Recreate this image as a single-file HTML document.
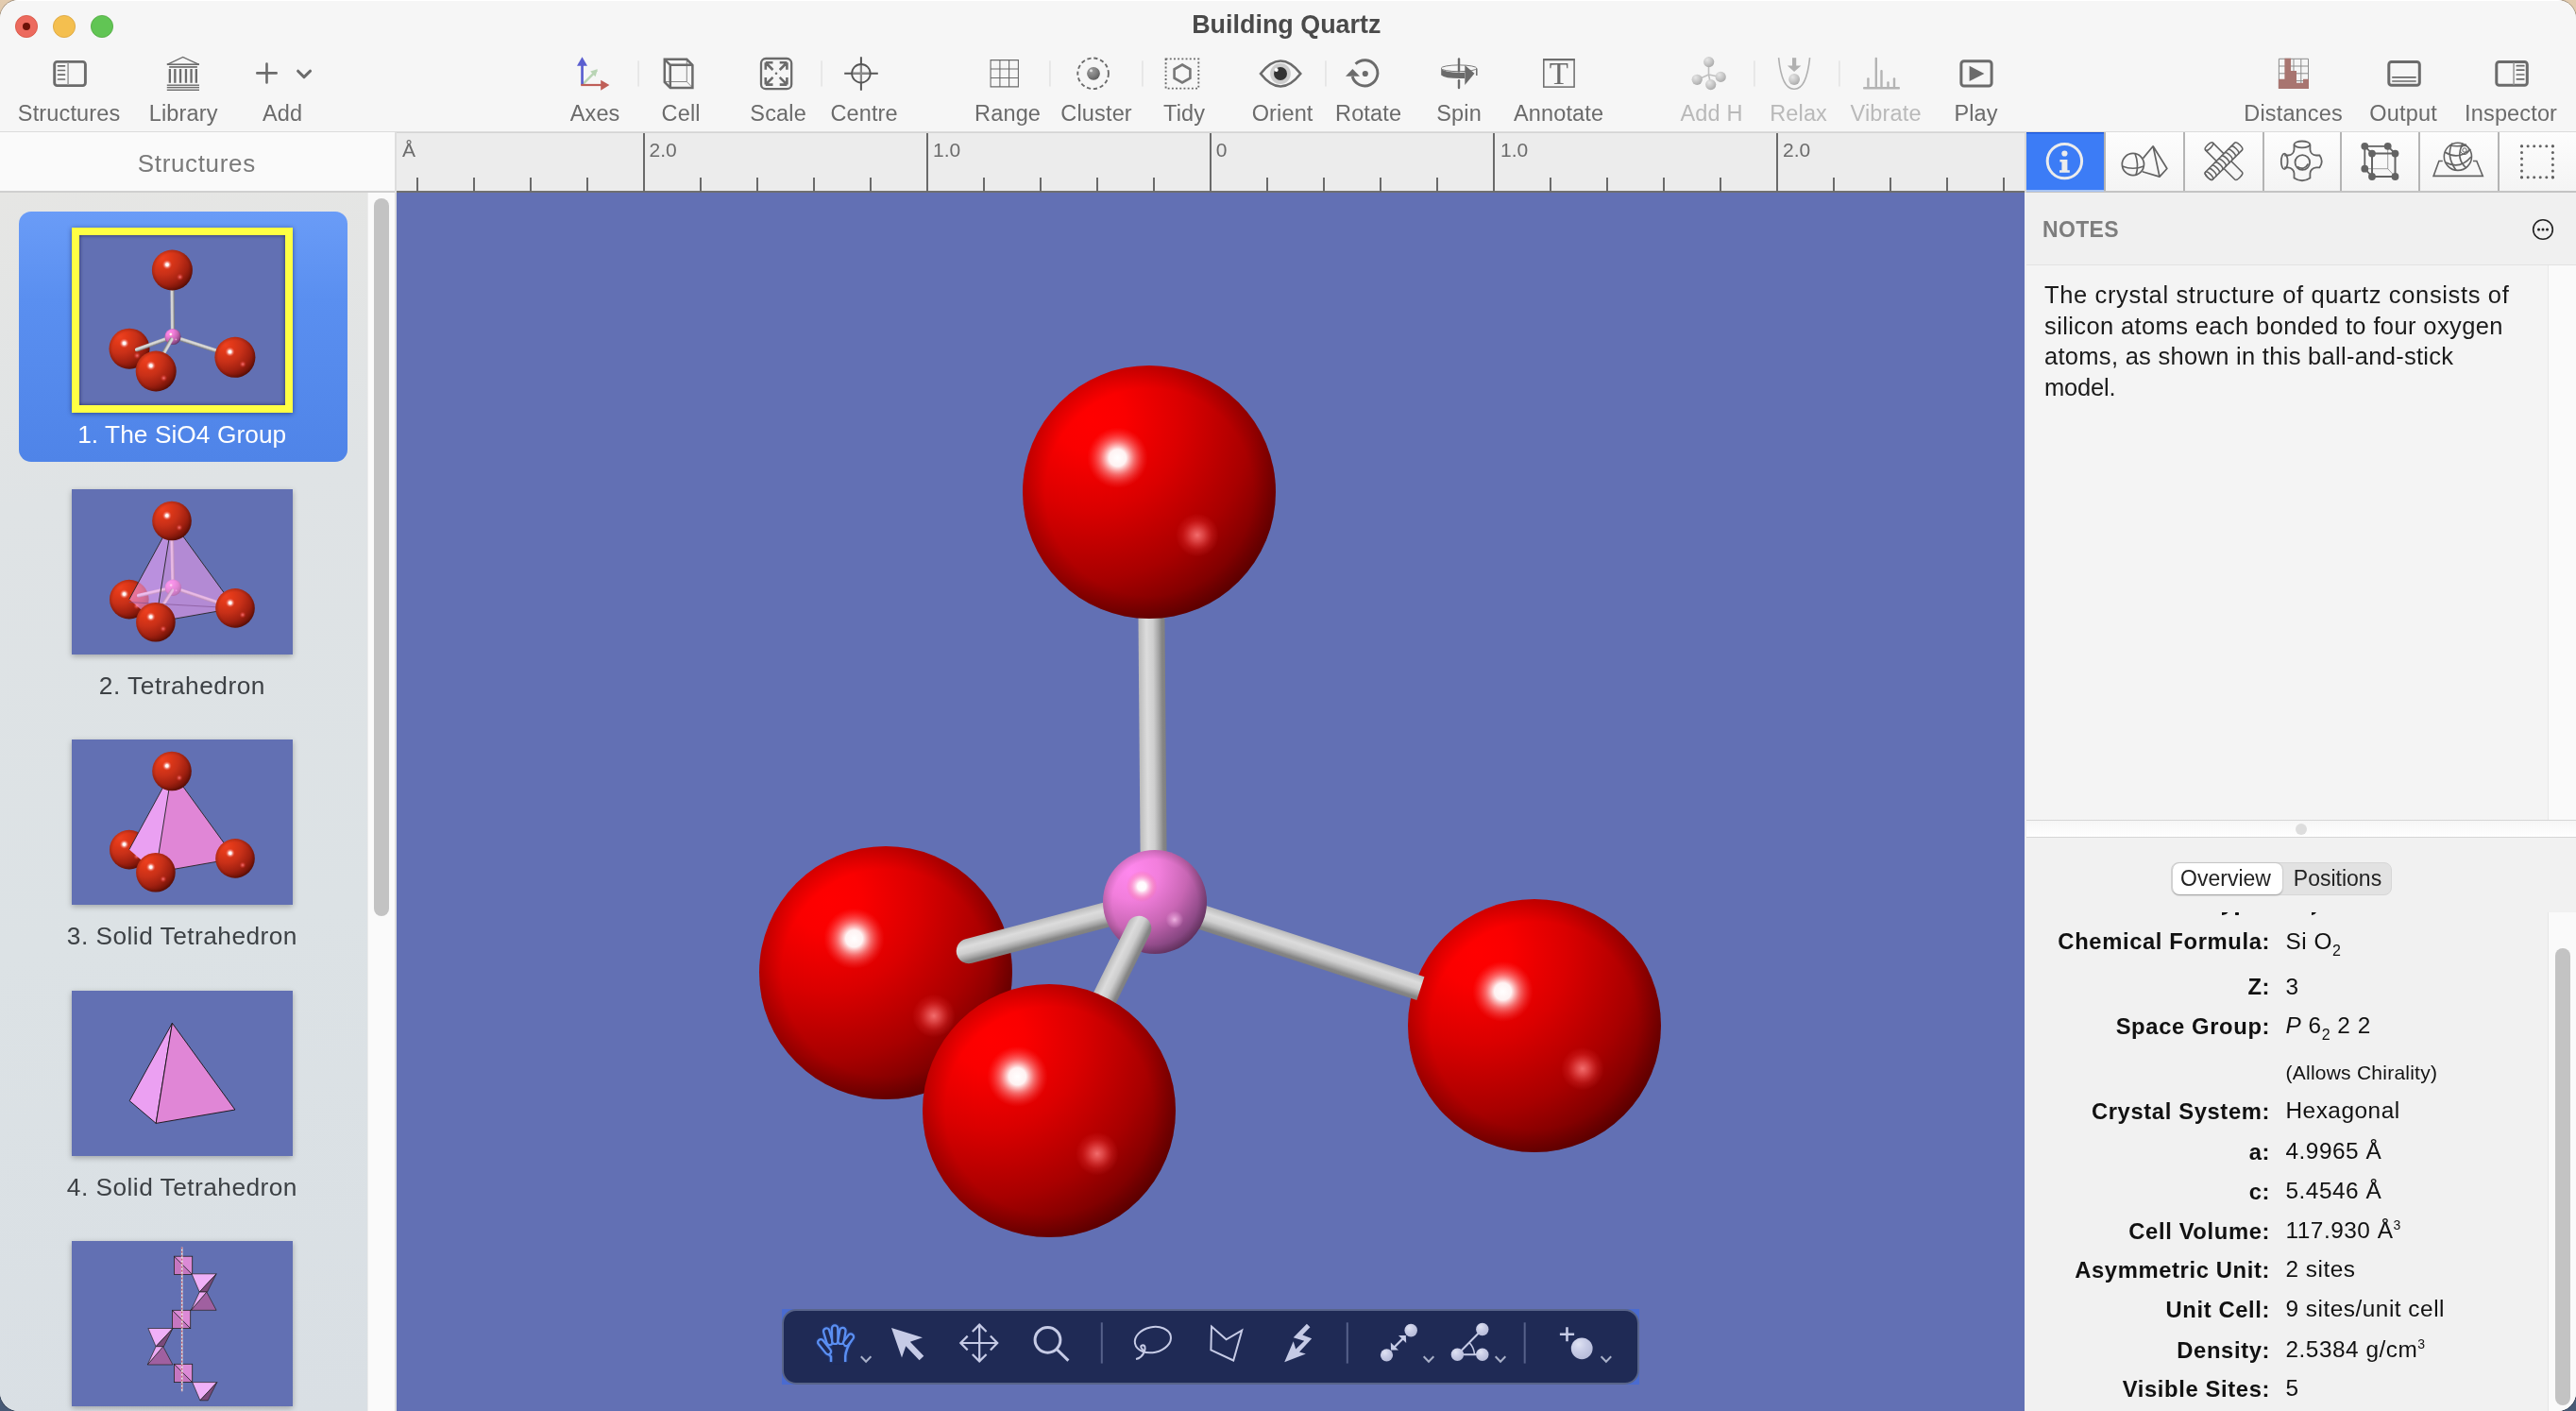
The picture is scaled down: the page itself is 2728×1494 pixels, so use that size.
<!DOCTYPE html>
<html><head><meta charset="utf-8"><style>
html,body{margin:0;padding:0;}
body{width:2728px;height:1494px;overflow:hidden;position:relative;background:linear-gradient(180deg,#e3ccb0 0px,#dcc6ab 60px,#8a8f98 800px,#485a76 1494px);font-family:"Liberation Sans", sans-serif;}
#win{will-change:transform;position:absolute;left:0;top:0;width:2728px;height:1494px;border-radius:20px;overflow:hidden;background:#f6f6f6;box-shadow:0 0 0 1px rgba(0,0,0,0.28);}
.t{position:absolute;white-space:pre;}
.r{position:absolute;}
.sb{font-size:16px;position:relative;top:7px;}
.sp{font-size:14px;position:relative;top:-9px;letter-spacing:0;}
svg{position:absolute;left:0;top:0;}
</style></head><body><div id="win">
<div class="r" style="left:0px;top:0px;width:2728px;height:140px;background:#f6f6f6;"></div><div class="r" style="left:0px;top:139px;width:2728px;height:1px;background:#dcdcdc;"></div><div class="r" style="left:0px;top:0px;width:2728px;height:1px;background:#ffffff;"></div><div class="t" style="top:13.2px;font-size:26.9px;line-height:26.9px;color:#4a4a4a;font-weight:700;left:762.3px;width:1200px;text-align:center;">Building Quartz</div><svg width="140" height="56" style="left:0;top:0"><circle cx="28" cy="28" r="11.6" fill="#ec6a5e" stroke="#d5503f" stroke-width="0.8"/><circle cx="28" cy="28" r="4" fill="#6b1208"/><circle cx="68" cy="28" r="11.6" fill="#f4bf4f" stroke="#d9a23a" stroke-width="0.8"/><circle cx="108" cy="28" r="11.6" fill="#61c554" stroke="#4fa83f" stroke-width="0.8"/></svg><div class="t" style="top:109.1px;font-size:23.5px;line-height:23.5px;color:#6b6b6b;letter-spacing:0.15px;left:-526.9px;width:1200px;text-align:center;">Structures</div><div class="t" style="top:109.1px;font-size:23.5px;line-height:23.5px;color:#6b6b6b;letter-spacing:0.15px;left:-405.9px;width:1200px;text-align:center;">Library</div><div class="t" style="top:109.1px;font-size:23.5px;line-height:23.5px;color:#6b6b6b;letter-spacing:0.15px;left:-300.9px;width:1200px;text-align:center;">Add</div><div class="t" style="top:109.1px;font-size:23.5px;line-height:23.5px;color:#6b6b6b;letter-spacing:0.15px;left:30.1px;width:1200px;text-align:center;">Axes</div><div class="t" style="top:109.1px;font-size:23.5px;line-height:23.5px;color:#6b6b6b;letter-spacing:0.15px;left:121.1px;width:1200px;text-align:center;">Cell</div><div class="t" style="top:109.1px;font-size:23.5px;line-height:23.5px;color:#6b6b6b;letter-spacing:0.15px;left:224.1px;width:1200px;text-align:center;">Scale</div><div class="t" style="top:109.1px;font-size:23.5px;line-height:23.5px;color:#6b6b6b;letter-spacing:0.15px;left:315.1px;width:1200px;text-align:center;">Centre</div><div class="t" style="top:109.1px;font-size:23.5px;line-height:23.5px;color:#6b6b6b;letter-spacing:0.15px;left:467.1px;width:1200px;text-align:center;">Range</div><div class="t" style="top:109.1px;font-size:23.5px;line-height:23.5px;color:#6b6b6b;letter-spacing:0.15px;left:561.1px;width:1200px;text-align:center;">Cluster</div><div class="t" style="top:109.1px;font-size:23.5px;line-height:23.5px;color:#6b6b6b;letter-spacing:0.15px;left:654.1px;width:1200px;text-align:center;">Tidy</div><div class="t" style="top:109.1px;font-size:23.5px;line-height:23.5px;color:#6b6b6b;letter-spacing:0.15px;left:758.1px;width:1200px;text-align:center;">Orient</div><div class="t" style="top:109.1px;font-size:23.5px;line-height:23.5px;color:#6b6b6b;letter-spacing:0.15px;left:849.1px;width:1200px;text-align:center;">Rotate</div><div class="t" style="top:109.1px;font-size:23.5px;line-height:23.5px;color:#6b6b6b;letter-spacing:0.15px;left:945.1px;width:1200px;text-align:center;">Spin</div><div class="t" style="top:109.1px;font-size:23.5px;line-height:23.5px;color:#6b6b6b;letter-spacing:0.15px;left:1050.6px;width:1200px;text-align:center;">Annotate</div><div class="t" style="top:109.1px;font-size:23.5px;line-height:23.5px;color:#b9b9b9;letter-spacing:0.15px;left:1212.6px;width:1200px;text-align:center;">Add H</div><div class="t" style="top:109.1px;font-size:23.5px;line-height:23.5px;color:#b9b9b9;letter-spacing:0.15px;left:1304.6px;width:1200px;text-align:center;">Relax</div><div class="t" style="top:109.1px;font-size:23.5px;line-height:23.5px;color:#b9b9b9;letter-spacing:0.15px;left:1397.1px;width:1200px;text-align:center;">Vibrate</div><div class="t" style="top:109.1px;font-size:23.5px;line-height:23.5px;color:#6b6b6b;letter-spacing:0.15px;left:1492.6px;width:1200px;text-align:center;">Play</div><div class="t" style="top:109.1px;font-size:23.5px;line-height:23.5px;color:#6b6b6b;letter-spacing:0.15px;left:1828.6px;width:1200px;text-align:center;">Distances</div><div class="t" style="top:109.1px;font-size:23.5px;line-height:23.5px;color:#6b6b6b;letter-spacing:0.15px;left:1945.1px;width:1200px;text-align:center;">Output</div><div class="t" style="top:109.1px;font-size:23.5px;line-height:23.5px;color:#6b6b6b;letter-spacing:0.15px;left:2059.1px;width:1200px;text-align:center;">Inspector</div><div class="r" style="left:0px;top:140px;width:418px;height:63px;background:#fafafa;"></div><div class="r" style="left:0px;top:202px;width:418px;height:2px;background:#cfcfcf;"></div><div class="t" style="top:159.5px;font-size:26px;line-height:26px;color:#7a7a7a;letter-spacing:0.65px;left:-391.7px;width:1200px;text-align:center;">Structures</div><div class="r" style="left:0px;top:204px;width:390px;height:1290px;background:linear-gradient(172deg,#e6e6e4 0%,#dfe3e5 25%,#dce2e5 60%,#d9dfe4 100%);"></div><div class="r" style="left:390px;top:204px;width:28px;height:1290px;background:#fafafa;"></div><div class="r" style="left:389px;top:204px;width:1px;height:1290px;background:#ececec;"></div><div class="r" style="left:396px;top:210px;width:16px;height:760px;background:#c3c3c3;border-radius:8px;"></div><div class="r" style="left:418px;top:140px;width:2px;height:1354px;background:#dedede;"></div><div class="r" style="left:420px;top:140px;width:1724px;height:64px;background:#ececec;"></div><div class="r" style="left:420px;top:202px;width:1724px;height:2px;background:#6f6f6f;"></div><div class="r" style="left:420px;top:204px;width:1724px;height:1290px;background:#6270b4;"></div><div class="r" style="left:2144px;top:140px;width:584px;height:1354px;background:#f0f0f0;"></div><svg width="0" height="0" style="position:absolute"><defs>
<radialGradient id="gRed" cx="0.27" cy="0.21" r="0.9" gradientUnits="objectBoundingBox">
 <stop offset="0" stop-color="#ff0000"/><stop offset="0.15" stop-color="#fa0000"/><stop offset="0.4" stop-color="#da0000"/>
 <stop offset="0.7" stop-color="#a80000"/><stop offset="0.87" stop-color="#800000"/><stop offset="1" stop-color="#640000"/>
</radialGradient>
<radialGradient id="gRedT" cx="0.27" cy="0.21" r="0.9">
 <stop offset="0" stop-color="#ec4020"/><stop offset="0.2" stop-color="#e03818"/><stop offset="0.45" stop-color="#c83018"/>
 <stop offset="0.72" stop-color="#a02010"/><stop offset="0.88" stop-color="#781408"/><stop offset="1" stop-color="#5a0c04"/>
</radialGradient>
<radialGradient id="gLimb" cx="0.5" cy="0.5" r="0.5">
 <stop offset="0.82" stop-color="#000" stop-opacity="0"/><stop offset="1" stop-color="#000" stop-opacity="0.16"/>
</radialGradient>
<radialGradient id="gSpec" cx="0.5" cy="0.5" r="0.5">
 <stop offset="0" stop-color="#fff" stop-opacity="1"/><stop offset="0.28" stop-color="#fff" stop-opacity="0.95"/><stop offset="0.55" stop-color="#ffd8d8" stop-opacity="0.5"/><stop offset="1" stop-color="#ff6060" stop-opacity="0"/>
</radialGradient>
<radialGradient id="gSpec2" cx="0.5" cy="0.5" r="0.5">
 <stop offset="0" stop-color="#ff8080" stop-opacity="0.85"/><stop offset="0.3" stop-color="#ff7070" stop-opacity="0.6"/><stop offset="0.7" stop-color="#ff5050" stop-opacity="0.2"/><stop offset="1" stop-color="#ff5050" stop-opacity="0"/>
</radialGradient>
<radialGradient id="gPink" cx="0.27" cy="0.21" r="0.9">
 <stop offset="0" stop-color="#ff88ee"/><stop offset="0.3" stop-color="#f27edc"/><stop offset="0.6" stop-color="#c866b4"/>
 <stop offset="0.85" stop-color="#8a4884"/><stop offset="1" stop-color="#6a3466"/>
</radialGradient>
<radialGradient id="gSpec2p" cx="0.5" cy="0.5" r="0.5">
 <stop offset="0" stop-color="#ffd0f4" stop-opacity="0.75"/><stop offset="0.4" stop-color="#ffc0f0" stop-opacity="0.45"/><stop offset="1" stop-color="#ffc0f0" stop-opacity="0"/>
</radialGradient>
<linearGradient id="gBond" x1="0" y1="0" x2="0" y2="1">
 <stop offset="0" stop-color="#bababa"/><stop offset="0.3" stop-color="#dcdcdc"/><stop offset="0.55" stop-color="#cecece"/>
 <stop offset="0.76" stop-color="#a4a4a4"/><stop offset="0.88" stop-color="#858585"/><stop offset="1" stop-color="#808080"/>
</linearGradient>
</defs></svg><svg width="1724" height="1290" style="left:420px;top:204px"><g transform="translate(-420,-204)"><circle cx="938" cy="1030" r="134" fill="url(#gRed)"/><circle cx="938" cy="1030" r="134" fill="url(#gLimb)"/><circle cx="904.5" cy="993.8" r="32.2" fill="url(#gSpec)"/><circle cx="988.9" cy="1075.6" r="22.8" fill="url(#gSpec2)"/><circle cx="1625" cy="1086" r="134" fill="url(#gRed)"/><circle cx="1625" cy="1086" r="134" fill="url(#gLimb)"/><circle cx="1591.5" cy="1049.8" r="32.2" fill="url(#gSpec)"/><circle cx="1675.9" cy="1131.6" r="22.8" fill="url(#gSpec2)"/><g transform="translate(1222.0,955.0) rotate(-90.48)"><rect x="0" y="-14.0" width="355.0126758300329" height="28" rx="0" fill="url(#gBond)"/></g><circle cx="1217" cy="521" r="134" fill="url(#gRed)"/><circle cx="1217" cy="521" r="134" fill="url(#gLimb)"/><circle cx="1183.5" cy="484.8" r="32.2" fill="url(#gSpec)"/><circle cx="1267.9" cy="566.6" r="22.8" fill="url(#gSpec2)"/><g transform="translate(1223.0,955.0) rotate(18.03)"><rect x="0" y="-13.0" width="295.9333032965368" height="26" rx="0" fill="url(#gBond)"/></g><g transform="translate(1026.0,1007.0) rotate(-14.79)"><rect x="-13.25" y="-13.25" width="216.99739262135355" height="26.5" rx="13.25" fill="url(#gBond)"/></g><circle cx="1223" cy="955" r="55" fill="url(#gPink)"/><circle cx="1223" cy="955" r="55" fill="url(#gLimb)"/><circle cx="1209.2" cy="938.5" r="16.5" fill="url(#gSpec)"/><circle cx="1243.9" cy="973.7" r="9.4" fill="url(#gSpec2p)"/><g transform="translate(1206.2,983.0) rotate(116.26) scale(1,-1)"><rect x="-13.1" y="-13.1" width="228.30232340753201" height="26.2" rx="13.1" fill="url(#gBond)"/></g><circle cx="1111" cy="1176" r="134" fill="url(#gRed)"/><circle cx="1111" cy="1176" r="134" fill="url(#gLimb)"/><circle cx="1077.5" cy="1139.8" r="32.2" fill="url(#gSpec)"/><circle cx="1161.9" cy="1221.6" r="22.8" fill="url(#gSpec2)"/></g></svg><div class="r" style="left:828px;top:1386px;width:908px;height:80px;background:#4a6bd0;"></div><div class="r" style="left:828px;top:1386px;width:908px;height:80px;background:#1f2a55;border:2px solid #58648a;border-radius:15px;box-sizing:border-box;"></div><div class="r" style="left:20px;top:224px;width:348px;height:265px;background:linear-gradient(180deg,#6a9cf7 0%,#5a8ff0 35%,#4f84e8 100%);border-radius:13px;"></div><div class="r" style="left:76px;top:241px;width:234px;height:196px;background:#ffff44;box-shadow:0 1px 5px rgba(0,0,40,0.45);"></div><div class="r" style="left:84px;top:249px;width:218px;height:180px;background:#6270b3;box-shadow:inset 0 0 4px rgba(0,0,40,0.6);"></div><div class="t" style="top:446.7px;font-size:26.3px;line-height:26.3px;color:#ffffff;letter-spacing:0.05px;left:-407.3px;width:1200px;text-align:center;">1. The SiO4 Group</div><div class="r" style="left:76px;top:518px;width:234px;height:175px;background:#6270b3;box-shadow:0 2px 6px rgba(0,0,0,0.28);"></div><div class="t" style="top:712.7px;font-size:26.3px;line-height:26.3px;color:#3d4145;letter-spacing:0.5px;left:-407.1px;width:1200px;text-align:center;">2. Tetrahedron</div><div class="r" style="left:76px;top:783px;width:234px;height:175px;background:#6270b3;box-shadow:0 2px 6px rgba(0,0,0,0.28);"></div><div class="t" style="top:978.2px;font-size:26.3px;line-height:26.3px;color:#3d4145;letter-spacing:0.46px;left:-407.1px;width:1200px;text-align:center;">3. Solid Tetrahedron</div><div class="r" style="left:76px;top:1049px;width:234px;height:175px;background:#6270b3;box-shadow:0 2px 6px rgba(0,0,0,0.28);"></div><div class="t" style="top:1243.7px;font-size:26.3px;line-height:26.3px;color:#3d4145;letter-spacing:0.46px;left:-407.1px;width:1200px;text-align:center;">4. Solid Tetrahedron</div><div class="r" style="left:76px;top:1314px;width:234px;height:175px;background:#6270b3;box-shadow:0 2px 6px rgba(0,0,0,0.28);"></div><svg width="418" height="1290" style="left:0;top:204px"><g transform="translate(0,-204)"><clipPath id="c1"><rect x="84" y="249" width="218" height="180"/></clipPath><g clip-path="url(#c1)"><circle cx="137" cy="369.2" r="21.5" fill="url(#gRedT)"/><circle cx="137" cy="369.2" r="21.5" fill="url(#gLimb)"/><circle cx="131.6" cy="363.4" r="5.2" fill="url(#gSpec)"/><circle cx="145.2" cy="376.5" r="3.7" fill="url(#gSpec2)"/><g transform="translate(183.0,356.5) rotate(-90.57)"><rect x="0" y="-2.1" width="60.502975133459344" height="4.2" rx="0" fill="url(#gBond)"/></g><circle cx="182.4" cy="286" r="21.5" fill="url(#gRedT)"/><circle cx="182.4" cy="286" r="21.5" fill="url(#gLimb)"/><circle cx="177.0" cy="280.2" r="5.2" fill="url(#gSpec)"/><circle cx="190.6" cy="293.3" r="3.7" fill="url(#gSpec2)"/><g transform="translate(183.0,356.5) rotate(17.99)"><rect x="0" y="-2.1" width="60.875693014535784" height="4.2" rx="0" fill="url(#gBond)"/></g><g transform="translate(145.0,370.2) rotate(-19.83)"><rect x="-2.1" y="-2.1" width="42.494182749499956" height="4.2" rx="2.1" fill="url(#gBond)"/></g><circle cx="183" cy="356.5" r="8.6" fill="url(#gPink)"/><circle cx="183" cy="356.5" r="8.6" fill="url(#gLimb)"/><circle cx="180.8" cy="353.9" r="2.6" fill="url(#gSpec)"/><circle cx="186.3" cy="359.4" r="1.5" fill="url(#gSpec2p)"/><g transform="translate(181.5,359.5) rotate(119.77)"><rect x="-2.1" y="-2.1" width="26.869739602991395" height="4.2" rx="2.1" fill="url(#gBond)"/></g><circle cx="165.2" cy="393" r="21.5" fill="url(#gRedT)"/><circle cx="165.2" cy="393" r="21.5" fill="url(#gLimb)"/><circle cx="159.8" cy="387.2" r="5.2" fill="url(#gSpec)"/><circle cx="173.4" cy="400.3" r="3.7" fill="url(#gSpec2)"/><circle cx="248.9" cy="378.3" r="21.5" fill="url(#gRedT)"/><circle cx="248.9" cy="378.3" r="21.5" fill="url(#gLimb)"/><circle cx="243.5" cy="372.5" r="5.2" fill="url(#gSpec)"/><circle cx="257.1" cy="385.6" r="3.7" fill="url(#gSpec2)"/></g><clipPath id="c2"><rect x="76" y="518" width="234" height="175"/></clipPath><g clip-path="url(#c2)"><circle cx="136.8" cy="634.6" r="20.8" fill="url(#gRedT)"/><circle cx="136.8" cy="634.6" r="20.8" fill="url(#gLimb)"/><circle cx="131.6" cy="629.0" r="5.0" fill="url(#gSpec)"/><circle cx="144.7" cy="641.7" r="3.5" fill="url(#gSpec2)"/><g transform="translate(183.3,622.2) rotate(-91.27)"><rect x="0" y="-1.9" width="58.71439346531654" height="3.8" rx="0" fill="url(#gBond)"/></g><g transform="translate(183.3,622.2) rotate(18.56)"><rect x="0" y="-1.9" width="58.75525508411989" height="3.8" rx="0" fill="url(#gBond)"/></g><g transform="translate(146.8,630.6) rotate(-12.96)"><rect x="-1.9" y="-1.9" width="39.35410524895769" height="3.8" rx="1.9" fill="url(#gBond)"/></g><circle cx="183.3" cy="622.2" r="8.7" fill="url(#gPink)"/><circle cx="183.3" cy="622.2" r="8.7" fill="url(#gLimb)"/><circle cx="181.1" cy="619.6" r="2.6" fill="url(#gSpec)"/><circle cx="186.6" cy="625.2" r="1.5" fill="url(#gSpec2p)"/><g transform="translate(182.3,625.2) rotate(122.45)"><rect x="-1.9" y="-1.9" width="25.008656386730927" height="3.8" rx="1.9" fill="url(#gBond)"/></g><polygon points="182,551.5 136.8,634.6 164.9,658.7" fill="#ffaaff" fill-opacity="0.56"/><polygon points="182,551.5 164.9,658.7 249,643.9" fill="#f8a0f0" fill-opacity="0.54"/><line x1="136.8" y1="637.6" x2="249" y2="643.9" stroke="#7a4a8a" stroke-width="0.6"/><polyline points="136.8,634.6 182,551.5 249,643.9 164.9,658.7 182,551.5" fill="none" stroke="#222" stroke-width="0.9"/><circle cx="249" cy="643.9" r="20.8" fill="url(#gRedT)"/><circle cx="249" cy="643.9" r="20.8" fill="url(#gLimb)"/><circle cx="243.8" cy="638.3" r="5.0" fill="url(#gSpec)"/><circle cx="256.9" cy="651.0" r="3.5" fill="url(#gSpec2)"/><circle cx="182" cy="551.5" r="20.8" fill="url(#gRedT)"/><circle cx="182" cy="551.5" r="20.8" fill="url(#gLimb)"/><circle cx="176.8" cy="545.9" r="5.0" fill="url(#gSpec)"/><circle cx="189.9" cy="558.6" r="3.5" fill="url(#gSpec2)"/><circle cx="164.9" cy="658.7" r="20.8" fill="url(#gRedT)"/><circle cx="164.9" cy="658.7" r="20.8" fill="url(#gLimb)"/><circle cx="159.7" cy="653.1" r="5.0" fill="url(#gSpec)"/><circle cx="172.8" cy="665.8" r="3.5" fill="url(#gSpec2)"/></g><clipPath id="c3"><rect x="76" y="783" width="234" height="175"/></clipPath><g clip-path="url(#c3)"><circle cx="136.8" cy="899.6" r="20.8" fill="url(#gRedT)"/><circle cx="136.8" cy="899.6" r="20.8" fill="url(#gLimb)"/><circle cx="131.6" cy="894.0" r="5.0" fill="url(#gSpec)"/><circle cx="144.7" cy="906.7" r="3.5" fill="url(#gSpec2)"/><polygon points="182,816.5 136.8,899.6 164.9,923.7" fill="#eaa0f2"/><polygon points="182,816.5 164.9,923.7 249,908.9" fill="#e086d6"/><polyline points="136.8,899.6 182,816.5 249,908.9 164.9,923.7 182,816.5" fill="none" stroke="#222" stroke-width="0.9"/><circle cx="249" cy="908.9" r="20.8" fill="url(#gRedT)"/><circle cx="249" cy="908.9" r="20.8" fill="url(#gLimb)"/><circle cx="243.8" cy="903.3" r="5.0" fill="url(#gSpec)"/><circle cx="256.9" cy="916.0" r="3.5" fill="url(#gSpec2)"/><circle cx="182" cy="816.5" r="20.8" fill="url(#gRedT)"/><circle cx="182" cy="816.5" r="20.8" fill="url(#gLimb)"/><circle cx="176.8" cy="810.9" r="5.0" fill="url(#gSpec)"/><circle cx="189.9" cy="823.6" r="3.5" fill="url(#gSpec2)"/><circle cx="164.9" cy="923.7" r="20.8" fill="url(#gRedT)"/><circle cx="164.9" cy="923.7" r="20.8" fill="url(#gLimb)"/><circle cx="159.7" cy="918.1" r="5.0" fill="url(#gSpec)"/><circle cx="172.8" cy="930.8" r="3.5" fill="url(#gSpec2)"/></g><polygon points="182.4,1083.3 137.2,1165.6 165.2,1189.4" fill="#eba0f2" stroke="#111" stroke-width="0.9" stroke-linejoin="round"/><polygon points="182.4,1083.3 165.2,1189.4 248.9,1175" fill="#e086d6" stroke="#111" stroke-width="0.9" stroke-linejoin="round"/><clipPath id="c5"><rect x="76" y="1314" width="234" height="175"/></clipPath><g clip-path="url(#c5)"><polygon points="184.4,1330.2 203.70000000000002,1330.2 203.70000000000002,1349.5" fill="#dc8ad6"/><polygon points="184.4,1330.2 184.4,1349.5 203.70000000000002,1349.5" fill="#c676c0"/><rect x="184.4" y="1330.2" width="19.3" height="19.3" fill="none" stroke="#222" stroke-width="0.8"/><line x1="184.4" y1="1330.2" x2="203.70000000000002" y2="1349.5" stroke="#222" stroke-width="0.8"/><polygon points="203.0,1348.8 229.1,1348.8 211.2,1368.0" fill="#f0b0f8" stroke="#222" stroke-width="0.7"/><polygon points="229.1,1348.8 211.2,1368.0 219.5,1368.0" fill="#7a4a7a" stroke="#222" stroke-width="0.7"/><polygon points="202.3,1387.3 229.1,1387.3 218.8,1368.0" fill="#a060a0" stroke="#222" stroke-width="0.7"/><polygon points="202.3,1387.3 211.2,1368.0 218.8,1368.0" fill="#eeaaf4" stroke="#222" stroke-width="0.7"/><polygon points="182.4,1387.3 201.70000000000002,1387.3 201.70000000000002,1406.6" fill="#dc8ad6"/><polygon points="182.4,1387.3 182.4,1406.6 201.70000000000002,1406.6" fill="#c676c0"/><rect x="182.4" y="1387.3" width="19.3" height="19.3" fill="none" stroke="#222" stroke-width="0.8"/><line x1="182.4" y1="1387.3" x2="201.70000000000002" y2="1406.6" stroke="#222" stroke-width="0.8"/><polygon points="156.9,1406.5 183.0,1406.5 165.1,1425.7" fill="#f0b0f8" stroke="#222" stroke-width="0.7"/><polygon points="183.0,1406.5 165.1,1425.7 173.4,1425.7" fill="#7a4a7a" stroke="#222" stroke-width="0.7"/><polygon points="156.2,1445.0 183.0,1445.0 172.7,1425.7" fill="#a060a0" stroke="#222" stroke-width="0.7"/><polygon points="156.2,1445.0 165.1,1425.7 172.7,1425.7" fill="#eeaaf4" stroke="#222" stroke-width="0.7"/><polygon points="184.4,1444.3 203.70000000000002,1444.3 203.70000000000002,1463.6" fill="#dc8ad6"/><polygon points="184.4,1444.3 184.4,1463.6 203.70000000000002,1463.6" fill="#c676c0"/><rect x="184.4" y="1444.3" width="19.3" height="19.3" fill="none" stroke="#222" stroke-width="0.8"/><line x1="184.4" y1="1444.3" x2="203.70000000000002" y2="1463.6" stroke="#222" stroke-width="0.8"/><polygon points="203.7,1463.6 229.8,1463.6 211.9,1482.8" fill="#f0b0f8" stroke="#222" stroke-width="0.7"/><polygon points="229.8,1463.6 211.9,1482.8 220.2,1482.8" fill="#7a4a7a" stroke="#222" stroke-width="0.7"/><line x1="192.7" y1="1320.6" x2="192.7" y2="1473.2" stroke="#e6e6e6" stroke-width="1.6"/><line x1="192.7" y1="1320.6" x2="192.7" y2="1473.2" stroke="#c04050" stroke-width="1" stroke-dasharray="2,2"/></g></svg><div class="r" style="left:2144px;top:140px;width:2px;height:64px;background:#d8d8d8;"></div><div class="r" style="left:2146px;top:140px;width:582px;height:63px;background:linear-gradient(180deg,#fdfdfd,#f4f4f4);"></div><div class="r" style="left:2146px;top:202px;width:582px;height:2px;background:#c4c4c4;"></div><div class="r" style="left:2146px;top:140px;width:82px;height:62px;background:#3c7cf6;"></div><div class="r" style="left:2146px;top:201px;width:82px;height:2px;background:#a8c4f4;"></div><div class="r" style="left:2228px;top:140px;width:2px;height:62px;background:#b4b4b4;"></div><div class="r" style="left:2312px;top:140px;width:2px;height:62px;background:#b4b4b4;"></div><div class="r" style="left:2396px;top:140px;width:2px;height:62px;background:#b4b4b4;"></div><div class="r" style="left:2478px;top:140px;width:2px;height:62px;background:#b4b4b4;"></div><div class="r" style="left:2561px;top:140px;width:2px;height:62px;background:#b4b4b4;"></div><div class="r" style="left:2645px;top:140px;width:2px;height:62px;background:#b4b4b4;"></div><div class="r" style="left:2146px;top:204px;width:582px;height:77px;background:#f0f0f0;"></div><div class="t" style="top:232.0px;font-size:23px;line-height:23px;color:#7d7d7d;font-weight:700;letter-spacing:0.35px;left:2163.0px;">NOTES</div><svg width="30" height="30" style="left:2678px;top:228px"><circle cx="15" cy="15" r="10.3" fill="none" stroke="#222" stroke-width="1.6"/><circle cx="10.5" cy="15" r="1.5" fill="#222"/><circle cx="15" cy="15" r="1.5" fill="#222"/><circle cx="19.5" cy="15" r="1.5" fill="#222"/></svg><div class="r" style="left:2146px;top:281px;width:553px;height:587px;background:#f4f4f4;"></div><div class="r" style="left:2146px;top:280px;width:582px;height:1px;background:#e2e2e2;"></div><div class="r" style="left:2699px;top:281px;width:29px;height:587px;background:#fafafa;"></div><div class="r" style="left:2698px;top:281px;width:1px;height:587px;background:#e8e8e8;"></div><div class="t" style="top:300.4px;font-size:25.5px;line-height:25.5px;color:#1b1b1b;letter-spacing:0.64px;left:2165.0px;">The crystal structure of quartz consists of</div><div class="t" style="top:332.9px;font-size:25.5px;line-height:25.5px;color:#1b1b1b;letter-spacing:0.38px;left:2165.0px;">silicon atoms each bonded to four oxygen</div><div class="t" style="top:365.4px;font-size:25.5px;line-height:25.5px;color:#1b1b1b;letter-spacing:0.29px;left:2165.0px;">atoms, as shown in this ball-and-stick</div><div class="t" style="top:397.9px;font-size:25.5px;line-height:25.5px;color:#1b1b1b;letter-spacing:-0.2px;left:2165.0px;">model.</div><div class="r" style="left:2146px;top:868px;width:582px;height:1px;background:#d6d6d6;"></div><div class="r" style="left:2146px;top:869px;width:582px;height:18px;background:linear-gradient(180deg,#f6f6f6,#ffffff);"></div><div class="r" style="left:2146px;top:886px;width:582px;height:1px;background:#d6d6d6;"></div><svg width="16" height="16" style="left:2429px;top:870px"><circle cx="8" cy="8" r="6" fill="#dddddd"/></svg><div class="r" style="left:2146px;top:887px;width:582px;height:607px;background:#f1f1f1;"></div><div class="r" style="left:2299px;top:913px;width:234px;height:35px;background:#e2e2e2;border:1px solid #d6d6d6;border-radius:8px;box-sizing:border-box;"></div><div class="r" style="left:2301px;top:914px;width:116px;height:33px;background:#ffffff;border-radius:7px;box-shadow:0 0.5px 2px rgba(0,0,0,0.3);"></div><div class="t" style="top:918.5px;font-size:23px;line-height:23px;color:#222;left:1757.0px;width:1200px;text-align:center;">Overview</div><div class="t" style="top:918.5px;font-size:23px;line-height:23px;color:#222;left:1875.5px;width:1200px;text-align:center;">Positions</div><div class="r" style="left:2146px;top:966px;width:553px;height:528px;background:#f1f1f1;"></div><div class="r" style="left:2699px;top:966px;width:29px;height:528px;background:#fafafa;"></div><div class="r" style="left:2698px;top:966px;width:1px;height:528px;background:#e6e6e6;"></div><svg width="120" height="10" style="left:2350px;top:963px"><path d="M3 3 H9.5 Q8 5.5 4 6 L3 6 Z" fill="#111"/><rect x="17" y="3" width="4" height="3" rx="0.8" fill="#111"/><path d="M98 3 H103 Q101.5 5.5 98.5 6 L98 6 Z" fill="#111"/></svg><div class="r" style="left:2706px;top:1004px;width:16px;height:484px;background:#c3c3c3;border-radius:8px;"></div><div class="t" style="top:985.4px;font-size:23.8px;line-height:23.8px;color:#111;font-weight:700;letter-spacing:0.62px;left:1204.1px;width:1200px;text-align:right;">Chemical Formula:</div><div class="t" style="top:984.8px;font-size:24.4px;line-height:24.4px;color:#111;letter-spacing:0.5px;left:2420.5px;">Si O<span class="sb">2</span></div><div class="t" style="top:1033.3px;font-size:23.8px;line-height:23.8px;color:#111;font-weight:700;letter-spacing:0.62px;left:1204.1px;width:1200px;text-align:right;">Z:</div><div class="t" style="top:1032.7px;font-size:24.4px;line-height:24.4px;color:#111;letter-spacing:0.5px;left:2420.5px;">3</div><div class="t" style="top:1074.9px;font-size:23.8px;line-height:23.8px;color:#111;font-weight:700;letter-spacing:0.62px;left:1204.1px;width:1200px;text-align:right;">Space Group:</div><div class="t" style="top:1074.3px;font-size:24.4px;line-height:24.4px;color:#111;letter-spacing:0.5px;left:2420.5px;"><i>P</i> 6<span class="sb">2</span> 2 2</div><div class="t" style="top:1122.9px;font-size:24.4px;line-height:24.4px;color:#111;letter-spacing:0.5px;left:2420.5px;"><span style="font-size:21px;letter-spacing:0.24px">(Allows Chirality)</span></div><div class="t" style="top:1164.9px;font-size:23.8px;line-height:23.8px;color:#111;font-weight:700;letter-spacing:0.62px;left:1204.1px;width:1200px;text-align:right;">Crystal System:</div><div class="t" style="top:1164.3px;font-size:24.4px;line-height:24.4px;color:#111;letter-spacing:0.5px;left:2420.5px;">Hexagonal</div><div class="t" style="top:1207.9px;font-size:23.8px;line-height:23.8px;color:#111;font-weight:700;letter-spacing:0.62px;left:1204.1px;width:1200px;text-align:right;">a:</div><div class="t" style="top:1207.3px;font-size:24.4px;line-height:24.4px;color:#111;letter-spacing:0.5px;left:2420.5px;">4.9965 Å</div><div class="t" style="top:1249.9px;font-size:23.8px;line-height:23.8px;color:#111;font-weight:700;letter-spacing:0.62px;left:1204.1px;width:1200px;text-align:right;">c:</div><div class="t" style="top:1249.3px;font-size:24.4px;line-height:24.4px;color:#111;letter-spacing:0.5px;left:2420.5px;">5.4546 Å</div><div class="t" style="top:1291.9px;font-size:23.8px;line-height:23.8px;color:#111;font-weight:700;letter-spacing:0.62px;left:1204.1px;width:1200px;text-align:right;">Cell Volume:</div><div class="t" style="top:1291.3px;font-size:24.4px;line-height:24.4px;color:#111;letter-spacing:0.5px;left:2420.5px;">117.930 Å<span class="sp">3</span></div><div class="t" style="top:1332.9px;font-size:23.8px;line-height:23.8px;color:#111;font-weight:700;letter-spacing:0.62px;left:1204.1px;width:1200px;text-align:right;">Asymmetric Unit:</div><div class="t" style="top:1332.3px;font-size:24.4px;line-height:24.4px;color:#111;letter-spacing:0.5px;left:2420.5px;">2 sites</div><div class="t" style="top:1374.9px;font-size:23.8px;line-height:23.8px;color:#111;font-weight:700;letter-spacing:0.62px;left:1204.1px;width:1200px;text-align:right;">Unit Cell:</div><div class="t" style="top:1374.3px;font-size:24.4px;line-height:24.4px;color:#111;letter-spacing:0.5px;left:2420.5px;">9 sites/unit cell</div><div class="t" style="top:1417.9px;font-size:23.8px;line-height:23.8px;color:#111;font-weight:700;letter-spacing:0.62px;left:1204.1px;width:1200px;text-align:right;">Density:</div><div class="t" style="top:1417.3px;font-size:24.4px;line-height:24.4px;color:#111;letter-spacing:0.5px;left:2420.5px;">2.5384 g/cm<span class="sp">3</span></div><div class="t" style="top:1458.9px;font-size:23.8px;line-height:23.8px;color:#111;font-weight:700;letter-spacing:0.62px;left:1204.1px;width:1200px;text-align:right;">Visible Sites:</div><div class="t" style="top:1458.3px;font-size:24.4px;line-height:24.4px;color:#111;letter-spacing:0.5px;left:2420.5px;">5</div><svg width="1724" height="64" style="left:420px;top:140px"><g transform="translate(-420,-140)"><rect x="420" y="140" width="1724" height="1" fill="#d4d4d4"/><rect x="441" y="188" width="2" height="15" fill="#6a6a6a"/><rect x="501" y="188" width="2" height="15" fill="#6a6a6a"/><rect x="561" y="188" width="2" height="15" fill="#6a6a6a"/><rect x="621" y="188" width="2" height="15" fill="#6a6a6a"/><rect x="681" y="141" width="2" height="62" fill="#6a6a6a"/><rect x="741" y="188" width="2" height="15" fill="#6a6a6a"/><rect x="801" y="188" width="2" height="15" fill="#6a6a6a"/><rect x="861" y="188" width="2" height="15" fill="#6a6a6a"/><rect x="921" y="188" width="2" height="15" fill="#6a6a6a"/><rect x="981" y="141" width="2" height="62" fill="#6a6a6a"/><rect x="1041" y="188" width="2" height="15" fill="#6a6a6a"/><rect x="1101" y="188" width="2" height="15" fill="#6a6a6a"/><rect x="1161" y="188" width="2" height="15" fill="#6a6a6a"/><rect x="1221" y="188" width="2" height="15" fill="#6a6a6a"/><rect x="1281" y="141" width="2" height="62" fill="#6a6a6a"/><rect x="1341" y="188" width="2" height="15" fill="#6a6a6a"/><rect x="1401" y="188" width="2" height="15" fill="#6a6a6a"/><rect x="1461" y="188" width="2" height="15" fill="#6a6a6a"/><rect x="1521" y="188" width="2" height="15" fill="#6a6a6a"/><rect x="1581" y="141" width="2" height="62" fill="#6a6a6a"/><rect x="1641" y="188" width="2" height="15" fill="#6a6a6a"/><rect x="1701" y="188" width="2" height="15" fill="#6a6a6a"/><rect x="1761" y="188" width="2" height="15" fill="#6a6a6a"/><rect x="1821" y="188" width="2" height="15" fill="#6a6a6a"/><rect x="1881" y="141" width="2" height="62" fill="#6a6a6a"/><rect x="1941" y="188" width="2" height="15" fill="#6a6a6a"/><rect x="2001" y="188" width="2" height="15" fill="#6a6a6a"/><rect x="2061" y="188" width="2" height="15" fill="#6a6a6a"/><rect x="2121" y="188" width="2" height="15" fill="#6a6a6a"/></g></svg><div class="t" style="top:148.2px;font-size:21px;line-height:21px;color:#6b6b6b;left:426.0px;">Å</div><div class="t" style="top:148.2px;font-size:21px;line-height:21px;color:#6b6b6b;left:687.6px;">2.0</div><div class="t" style="top:148.2px;font-size:21px;line-height:21px;color:#6b6b6b;left:988.0px;">1.0</div><div class="t" style="top:148.2px;font-size:21px;line-height:21px;color:#6b6b6b;left:1287.7px;">0</div><div class="t" style="top:148.2px;font-size:21px;line-height:21px;color:#6b6b6b;left:1589.0px;">1.0</div><div class="t" style="top:148.2px;font-size:21px;line-height:21px;color:#6b6b6b;left:1888.0px;">2.0</div><svg width="2728" height="140" style="left:0;top:0"><defs><radialGradient id="gBall" cx="0.35" cy="0.3" r="0.75"><stop offset="0" stop-color="#e6e6e6"/><stop offset="0.6" stop-color="#c4c4c4"/><stop offset="1" stop-color="#a8a8a8"/></radialGradient>
<radialGradient id="gBallD" cx="0.35" cy="0.3" r="0.75"><stop offset="0" stop-color="#a0a0a0"/><stop offset="0.6" stop-color="#7c7c7c"/><stop offset="1" stop-color="#5a5a5a"/></radialGradient></defs><rect x="57.7" y="65.4" width="32.7" height="25.2" rx="2.8" fill="none" stroke="#6b6b6b" stroke-width="2.9"/><rect x="71.2" y="66.5" width="1.8" height="23" fill="#a6a6a6"/><line x1="61.5" y1="69.8" x2="68.5" y2="69.8" stroke="#6b6b6b" stroke-width="1.7" stroke-linecap="round"/><line x1="61.5" y1="74.5" x2="68.5" y2="74.5" stroke="#6b6b6b" stroke-width="1.7" stroke-linecap="round"/><line x1="61.5" y1="79.1" x2="68.5" y2="79.1" stroke="#6b6b6b" stroke-width="1.7" stroke-linecap="round"/><line x1="61.5" y1="84" x2="68.5" y2="84" stroke="#6b6b6b" stroke-width="1.7" stroke-linecap="round"/><polyline points="177,68.3 193.7,60.5 210.8,68.3" fill="none" stroke="#6b6b6b" stroke-width="1.3"/><rect x="176.8" y="67.4" width="34.2" height="1.6" fill="#6b6b6b"/><rect x="179.2" y="70.1" width="29.7" height="1.7" fill="#6b6b6b"/><rect x="178.70000000000002" y="73" width="2.3" height="14.8" fill="#6b6b6b"/><rect x="184.20000000000002" y="73" width="2.3" height="14.8" fill="#6b6b6b"/><rect x="189.9" y="73" width="2.3" height="14.8" fill="#6b6b6b"/><rect x="195.8" y="73" width="2.3" height="14.8" fill="#6b6b6b"/><rect x="201.4" y="73" width="2.3" height="14.8" fill="#6b6b6b"/><rect x="206.70000000000002" y="73" width="2.3" height="14.8" fill="#6b6b6b"/><rect x="176.8" y="89.5" width="34.2" height="1.4" fill="#6b6b6b"/><rect x="176.8" y="91.89999999999999" width="34.2" height="1.4" fill="#6b6b6b"/><rect x="176.8" y="94.6" width="34.2" height="1.4" fill="#6b6b6b"/><path d="M272.3 77.4 H292.7 M282.5 67.5 V87.5" stroke="#6b6b6b" stroke-width="2.6" stroke-linecap="round" fill="none"/><path d="M315.6 75.2 L322 81.6 L328.6 75.2" stroke="#6b6b6b" stroke-width="3" stroke-linecap="round" stroke-linejoin="round" fill="none"/><path d="M617.8 88.6 L632 74.3" stroke="#b8d4b4" stroke-width="2.4"/><polygon points="625.2,75.5 632.9,73.2 630.5,81.2" fill="#b8d4b4"/><rect x="615.2" y="69" width="2.7" height="21" fill="#5b5fd0"/><polygon points="616.5,60.3 611,69.7 622,69.7" fill="#5b5fd0"/><rect x="615.2" y="88.9" width="22" height="2.2" fill="#bf5f58"/><polygon points="636.2,84.8 636.2,95.7 645.4,90" fill="#bf5f58"/><rect x="675.4" y="64.3" width="1.3" height="27.3" fill="#e0e0e0"/><rect x="869.4" y="64.3" width="1.3" height="27.3" fill="#e0e0e0"/><rect x="1111.3000000000002" y="64.3" width="1.3" height="27.3" fill="#e0e0e0"/><rect x="1209.3000000000002" y="64.3" width="1.3" height="27.3" fill="#e0e0e0"/><rect x="1403.3000000000002" y="64.3" width="1.3" height="27.3" fill="#e0e0e0"/><rect x="1857.3000000000002" y="64.3" width="1.3" height="27.3" fill="#e0e0e0"/><rect x="1947.3000000000002" y="64.3" width="1.3" height="27.3" fill="#e0e0e0"/><path d="M703.8 62.8 H727.3 L733.4 68.9 V93 H709.8 L703.8 87 Z" fill="none" stroke="#6b6b6b" stroke-width="2.5"/><path d="M703.8 62.8 L709.8 68.8 H733.4 M709.8 68.8 V93" fill="none" stroke="#6b6b6b" stroke-width="2.5"/><path d="M727.3 62.5 V86.5 H703.5 M727.3 86.5 L733.6 93" fill="none" stroke="#6b6b6b" stroke-width="0.8"/><rect x="806" y="62" width="32.2" height="32.2" rx="5" fill="none" stroke="#6b6b6b" stroke-width="2.3"/><path d="M810.8 66.2 H818.5 M810.8 66.2 V73.7 M811.5 67 L818.5 74 M833.4 66.2 H825.7 M833.4 66.2 V73.7 M832.7 67 L825.7 74 M810.8 89.6 H818.5 M810.8 89.6 V82 M811.5 88.8 L818.5 81.8 M833.4 89.6 H825.7 M833.4 89.6 V82 M832.7 88.8 L825.7 81.8" fill="none" stroke="#6b6b6b" stroke-width="2.6"/><circle cx="822" cy="77.8" r="1.3" fill="#6b6b6b"/><path d="M911.9 60.3 V95.7 M894.2 77.8 H929.8" stroke="#555" stroke-width="2"/><path d="M911.9 69 V86.5 M903 77.8 H920.8" stroke="#8a8a8a" stroke-width="2"/><circle cx="911.9" cy="77.8" r="9.8" fill="none" stroke="#555" stroke-width="1.8"/><path d="M1049.1 63.6 H1078.4 V91.9 H1049.1 Z M1058.9 63.6 V91.9 M1068.6 63.6 V91.9 M1049.1 73 H1078.4 M1049.1 82.5 H1078.4" fill="none" stroke="#6b6b6b" stroke-width="1.1"/><circle cx="1157.6" cy="77.8" r="16.3" fill="none" stroke="#6b6b6b" stroke-width="1.9" stroke-dasharray="4.2,2.8"/><circle cx="1158" cy="77.8" r="6.9" fill="url(#gBallD)"/><circle cx="1155.5" cy="74.8" r="1.5" fill="#ddd"/><rect x="1234.6" y="62.4" width="34.7" height="31.2" fill="none" stroke="#6b6b6b" stroke-width="1.9" stroke-dasharray="1.9,2.3"/><polygon points="1252,68.5 1260.4,73.3 1260.4,82.7 1252,87.5 1243.6,82.7 1243.6,73.3" fill="none" stroke="#777" stroke-width="2.6"/><path d="M1335 78 Q1356 51 1377.3 78 Q1356 105 1335 78 Z" fill="none" stroke="#6b6b6b" stroke-width="2.6"/><circle cx="1356" cy="78" r="10.9" fill="#cccccc"/><circle cx="1356" cy="78" r="7" fill="#333"/><circle cx="1351.7" cy="73.9" r="2" fill="#fff"/><path d="M1435.6 67.8 A13.6 13.6 0 1 1 1432.2 81" fill="none" stroke="#6b6b6b" stroke-width="2.9"/><polygon points="1425,80.7 1440,80.7 1432.4,73" fill="#6b6b6b"/><circle cx="1445.8" cy="78" r="3.1" fill="#6b6b6b"/><rect x="1543.8" y="61.2" width="2.4" height="9" rx="1.2" fill="#6b6b6b"/><rect x="1543.8" y="84" width="2.4" height="10.2" rx="1.2" fill="#6b6b6b"/><ellipse cx="1545" cy="72.3" rx="18.8" ry="3.4" fill="none" stroke="#6b6b6b" stroke-width="0.9"/><path d="M1526.2 72.5 V79.5 Q1530 83.5 1551 83 V76.8 Q1530 77.5 1526.2 72.5 Z" fill="#6b6b6b"/><polygon points="1551.3,69.1 1551.3,90 1561.5,77.7" fill="#6b6b6b"/><rect x="1543.8" y="70" width="2.4" height="6.5" fill="#6b6b6b"/><path d="M1563.8 72.5 V80" stroke="#6b6b6b" stroke-width="1.5"/><rect x="1634.8" y="62.9" width="32.3" height="29.2" fill="none" stroke="#6b6b6b" stroke-width="1.5"/><rect x="1634.1" y="62.2" width="33.7" height="2" fill="#6b6b6b"/></svg><div class="t" style="top:61.6px;font-size:33px;line-height:33px;color:#6b6b6b;left:1050.8px;width:1200px;text-align:center;font-family:'Liberation Serif',serif;">T</div><svg width="2728" height="140" style="left:0;top:0"><path d="M1809.5 66 V79 L1797.5 84.5 M1809.5 79 L1822 81.5 M1809.5 79 L1811.7 89.6" stroke="#c0c0c0" stroke-width="1.6" fill="none"/><circle cx="1809.7" cy="65.6" r="5.6" fill="url(#gBall)"/><circle cx="1797.2" cy="84.3" r="5.6" fill="url(#gBall)"/><circle cx="1822.2" cy="81.4" r="5.6" fill="url(#gBall)"/><circle cx="1811.7" cy="89.6" r="5.6" fill="url(#gBall)"/><path d="M1883.6 61.2 Q1887 95 1900.1 94.2 Q1913 95 1916.6 61.2" fill="none" stroke="#b0b0b0" stroke-width="1.6"/><rect x="1898" y="61.2" width="4.2" height="9" fill="#b0b0b0"/><polygon points="1892.9,69.5 1907.4,69.5 1900.1,75.9" fill="#b0b0b0"/><circle cx="1900.1" cy="84" r="5.9" fill="url(#gBall)"/><rect x="1973" y="92" width="39" height="2.6" rx="1" fill="#b4b4b4"/><rect x="1977.2" y="82.3" width="2.4" height="10.200000000000003" rx="1" fill="#b4b4b4"/><rect x="1985.6" y="60.8" width="2.4" height="31.700000000000003" rx="1" fill="#b4b4b4"/><rect x="1991.3" y="74" width="2.4" height="18.5" rx="1" fill="#b4b4b4"/><rect x="1998.3" y="86.3" width="2.4" height="6.200000000000003" rx="1" fill="#b4b4b4"/><rect x="2004.8" y="82.3" width="2.4" height="10.200000000000003" rx="1" fill="#b4b4b4"/><rect x="2076.9" y="64.7" width="32.2" height="26.3" rx="3" fill="none" stroke="#6b6b6b" stroke-width="3"/><polygon points="2085.6,69.8 2085.6,85.9 2101.4,77.9" fill="#6b6b6b"/><path d="M2413.4 62.3 H2444.5 V93.4 H2413.4 Z M2421.2 62.3 V93.4 M2429 62.3 V93.4 M2436.8 62.3 V93.4 M2413.4 70 H2444.5 M2413.4 77.8 H2444.5 M2413.4 85.6 H2444.5" fill="none" stroke="#8c8c8c" stroke-width="1"/><path d="M2412.9 93.9 V83.8 H2419.4 V61.8 H2426.1 V75 H2432 V87.7 H2439 V83.8 H2445 V93.9 Z" fill="#a87570"/><rect x="2529.8" y="65.6" width="32.5" height="24.6" rx="2.8" fill="none" stroke="#6b6b6b" stroke-width="3"/><path d="M2533.2 81.9 H2558.7 M2533.2 86 H2558.7" stroke="#6b6b6b" stroke-width="1.7"/><rect x="2643.8" y="65.6" width="32.5" height="24.6" rx="2.8" fill="none" stroke="#6b6b6b" stroke-width="3"/><rect x="2661.2" y="66.5" width="1.8" height="23" fill="#a6a6a6"/><line x1="2665.3" y1="69.7" x2="2672.8" y2="69.7" stroke="#6b6b6b" stroke-width="1.7" stroke-linecap="round"/><line x1="2665.3" y1="74.2" x2="2672.8" y2="74.2" stroke="#6b6b6b" stroke-width="1.7" stroke-linecap="round"/><line x1="2665.3" y1="79" x2="2672.8" y2="79" stroke="#6b6b6b" stroke-width="1.7" stroke-linecap="round"/><line x1="2665.3" y1="83.8" x2="2672.8" y2="83.8" stroke="#6b6b6b" stroke-width="1.7" stroke-linecap="round"/></svg><svg width="584" height="64" style="left:2144px;top:140px"><g transform="translate(-2144,-140)"><rect x="2146" y="140" width="82" height="1.3" fill="#1b55d6"/><circle cx="2186.4" cy="170.6" r="18.2" fill="none" stroke="#ececec" stroke-width="3"/><circle cx="2186.4" cy="162.5" r="3.1" fill="#ececec"/><path d="M2181.4 169 H2189.4 V180.2 H2191.8 V182.8 H2181 V180.2 H2183.4 V171.5 H2181.4 Z" fill="#ececec"/><g fill="none" stroke="#636363" stroke-width="1.7" stroke-linejoin="round"><circle cx="2258.9" cy="174" r="11.6"/><path d="M2247.5 176 Q2258.9 180.5 2270.3 176"/><path d="M2261 162.5 Q2265.5 174 2262 185.6"/><path d="M2269.5 167.6 L2280.1 154.8 L2294.9 178.5 L2287 187.1 L2268.8 181.8 M2280.1 154.8 L2287 187.1"/></g><g fill="none" stroke="#636363" stroke-width="1.6"><g transform="translate(2355,170.6) rotate(45)"><path d="M-22 -5.5 H22 A2.2 5.5 0 0 1 22 5.5 H-22"/><ellipse cx="-22" cy="0" rx="2.2" ry="5.5"/></g><g transform="translate(2355,170.6) rotate(-45)"><path d="M-22 -5.5 H22 A2.2 5.5 0 0 1 22 5.5 H-22 A2.2 5.5 0 0 1 -22 -5.5" fill="#f7f7f7"/><ellipse cx="-22" cy="0" rx="2.2" ry="5.5"/><path d="M-17.2 -5.5 A2.2 5.5 0 0 1 -17.2 5.5"/><path d="M-12.4 -5.5 A2.2 5.5 0 0 1 -12.4 5.5"/><path d="M-7.600000000000001 -5.5 A2.2 5.5 0 0 1 -7.600000000000001 5.5"/><path d="M-2.8000000000000007 -5.5 A2.2 5.5 0 0 1 -2.8000000000000007 5.5"/><path d="M2.0 -5.5 A2.2 5.5 0 0 1 2.0 5.5"/><path d="M6.799999999999997 -5.5 A2.2 5.5 0 0 1 6.799999999999997 5.5"/><path d="M11.600000000000001 -5.5 A2.2 5.5 0 0 1 11.600000000000001 5.5"/><path d="M16.4 -5.5 A2.2 5.5 0 0 1 16.4 5.5"/></g></g><g fill="none" stroke="#636363" stroke-width="1.8"><path d="M2429.5 153 V158.5 Q2429 164 2423 164.5 H2419.2 M2419.2 177.3 H2423 Q2429 178 2429.5 183.5 V188.5 Q2438 194 2446.4 188.5 V183.5 Q2447 178 2453 177.3 H2456.5 Q2461 170.9 2456.5 164.5 H2453 Q2447 164 2446.4 158.5 V153"/><ellipse cx="2437.9" cy="152.9" rx="8.4" ry="3.4"/><ellipse cx="2419.2" cy="170.9" rx="3.4" ry="8.3"/><circle cx="2438.3" cy="172" r="7.8"/><path d="M2433 176.5 Q2440 181 2444.5 173.5"/></g><g stroke="#636363" fill="none"><path d="M2504.3 154.8 H2528.7 M2504.3 154.8 V178.7 L2512 187 M2504.3 154.8 L2512 162.6 M2528.7 154.8 L2536.5 162.6" stroke-width="1.8"/><path d="M2512 162.6 H2536.5 V187 H2512 Z" stroke-width="2"/><path d="M2528.7 154.8 V178.7 H2504.3 M2528.7 178.7 L2536.5 187" stroke-width="0.6"/></g><circle cx="2504.3" cy="154.8" r="3.9" fill="#636363"/><circle cx="2528.7" cy="154.8" r="3.9" fill="#636363"/><circle cx="2512" cy="162.6" r="3.9" fill="#636363"/><circle cx="2536.5" cy="162.6" r="3.9" fill="#636363"/><circle cx="2504.3" cy="178.7" r="3.9" fill="#636363"/><circle cx="2512" cy="187" r="3.9" fill="#636363"/><circle cx="2536.5" cy="187" r="3.9" fill="#636363"/><g fill="none" stroke="#636363" stroke-width="1.6"><polyline points="2586.8,170.5 2582.9,170.5 2577.1,186.4 2629.3,186.4 2622.8,170.5 2619,170.5"/><circle cx="2602.9" cy="165.8" r="14.6"/><path d="M2589 161 Q2603 170 2616.5 158 M2590 172 Q2605 180 2617 166 M2594 154 Q2605 156 2612 153"/><path d="M2597 151.5 Q2590 165 2601 180.3 M2608 151.5 Q2600 168 2612 178"/><circle cx="2610" cy="159" r="4.5" stroke-width="1"/><circle cx="2610" cy="159" r="2.2" stroke-width="1"/></g><circle cx="2670.5" cy="154.8" r="1.5" fill="#636363"/><circle cx="2670.5" cy="187.7" r="1.5" fill="#636363"/><circle cx="2670.5" cy="154.8" r="1.5" fill="#636363"/><circle cx="2703.4" cy="154.8" r="1.5" fill="#636363"/><circle cx="2677.1" cy="154.8" r="1.5" fill="#636363"/><circle cx="2677.1" cy="187.7" r="1.5" fill="#636363"/><circle cx="2670.5" cy="161.4" r="1.5" fill="#636363"/><circle cx="2703.4" cy="161.4" r="1.5" fill="#636363"/><circle cx="2683.7" cy="154.8" r="1.5" fill="#636363"/><circle cx="2683.7" cy="187.7" r="1.5" fill="#636363"/><circle cx="2670.5" cy="168.0" r="1.5" fill="#636363"/><circle cx="2703.4" cy="168.0" r="1.5" fill="#636363"/><circle cx="2690.2" cy="154.8" r="1.5" fill="#636363"/><circle cx="2690.2" cy="187.7" r="1.5" fill="#636363"/><circle cx="2670.5" cy="174.5" r="1.5" fill="#636363"/><circle cx="2703.4" cy="174.5" r="1.5" fill="#636363"/><circle cx="2696.8" cy="154.8" r="1.5" fill="#636363"/><circle cx="2696.8" cy="187.7" r="1.5" fill="#636363"/><circle cx="2670.5" cy="181.1" r="1.5" fill="#636363"/><circle cx="2703.4" cy="181.1" r="1.5" fill="#636363"/><circle cx="2703.4" cy="154.8" r="1.5" fill="#636363"/><circle cx="2703.4" cy="187.7" r="1.5" fill="#636363"/><circle cx="2670.5" cy="187.7" r="1.5" fill="#636363"/><circle cx="2703.4" cy="187.7" r="1.5" fill="#636363"/><circle cx="2703.4" cy="187.7" r="1.5" fill="#636363"/></g></svg><svg width="920" height="90" style="left:822px;top:1380px"><g transform="translate(-822,-1380)"><defs><radialGradient id="gPB" cx="0.35" cy="0.3" r="0.7"><stop offset="0" stop-color="#dfe2f2"/><stop offset="0.5" stop-color="#c8cce6"/><stop offset="1" stop-color="#b8bdda"/></radialGradient>
<filter id="glow" x="-30%" y="-30%" width="160%" height="160%"><feGaussianBlur stdDeviation="1.2"/></filter></defs><g filter="url(#glow)" opacity="0.7"><path d="M880 1442 V1436.5 L873 1429 M895.2 1442 V1436 Q896 1428 902 1418.5" fill="none" stroke="#2f5cc0" stroke-width="2.4"/><line x1="877" y1="1431" x2="869.2" y2="1421.2" stroke="#2f5cc0" stroke-width="8.4" stroke-linecap="round"/><line x1="877" y1="1431" x2="869.2" y2="1421.2" stroke="#1f2a55" stroke-width="3.8000000000000007" stroke-linecap="round"/><line x1="878.6" y1="1421" x2="875.2" y2="1409.6" stroke="#2f5cc0" stroke-width="8.6" stroke-linecap="round"/><line x1="878.6" y1="1421" x2="875.2" y2="1409.6" stroke="#1f2a55" stroke-width="4.0" stroke-linecap="round"/><line x1="884.3" y1="1420" x2="884.1" y2="1406.6" stroke="#2f5cc0" stroke-width="8.6" stroke-linecap="round"/><line x1="884.3" y1="1420" x2="884.1" y2="1406.6" stroke="#1f2a55" stroke-width="4.0" stroke-linecap="round"/><line x1="890.6" y1="1420" x2="892.4" y2="1409" stroke="#2f5cc0" stroke-width="8.6" stroke-linecap="round"/><line x1="890.6" y1="1420" x2="892.4" y2="1409" stroke="#1f2a55" stroke-width="4.0" stroke-linecap="round"/><line x1="896" y1="1422" x2="901" y2="1415.5" stroke="#2f5cc0" stroke-width="8.4" stroke-linecap="round"/><line x1="896" y1="1422" x2="901" y2="1415.5" stroke="#1f2a55" stroke-width="3.8000000000000007" stroke-linecap="round"/><polygon points="882,1443 882,1424 893.3,1424 893.3,1443" fill="#1f2a55"/></g><path d="M880 1442 V1436.5 L873 1429 M895.2 1442 V1436 Q896 1428 902 1418.5" fill="none" stroke="#5b8ff2" stroke-width="2.4"/><line x1="877" y1="1431" x2="869.2" y2="1421.2" stroke="#5b8ff2" stroke-width="8.4" stroke-linecap="round"/><line x1="877" y1="1431" x2="869.2" y2="1421.2" stroke="#1f2a55" stroke-width="3.8000000000000007" stroke-linecap="round"/><line x1="878.6" y1="1421" x2="875.2" y2="1409.6" stroke="#5b8ff2" stroke-width="8.6" stroke-linecap="round"/><line x1="878.6" y1="1421" x2="875.2" y2="1409.6" stroke="#1f2a55" stroke-width="4.0" stroke-linecap="round"/><line x1="884.3" y1="1420" x2="884.1" y2="1406.6" stroke="#5b8ff2" stroke-width="8.6" stroke-linecap="round"/><line x1="884.3" y1="1420" x2="884.1" y2="1406.6" stroke="#1f2a55" stroke-width="4.0" stroke-linecap="round"/><line x1="890.6" y1="1420" x2="892.4" y2="1409" stroke="#5b8ff2" stroke-width="8.6" stroke-linecap="round"/><line x1="890.6" y1="1420" x2="892.4" y2="1409" stroke="#1f2a55" stroke-width="4.0" stroke-linecap="round"/><line x1="896" y1="1422" x2="901" y2="1415.5" stroke="#5b8ff2" stroke-width="8.4" stroke-linecap="round"/><line x1="896" y1="1422" x2="901" y2="1415.5" stroke="#1f2a55" stroke-width="3.8000000000000007" stroke-linecap="round"/><polygon points="882,1443 882,1424 893.3,1424 893.3,1443" fill="#1f2a55"/><path d="M911.8 1436.3 L917.1 1441.8 L922.4 1436.3" fill="none" stroke="#a8b0c8" stroke-width="2"/><polygon points="944,1406 977,1416.3 963.8,1420.8 978.3,1435.8 973.6,1440.3 959.3,1425.2 955,1437.4" fill="#c6cbe6"/><g fill="none" stroke="#c6cbe6" stroke-width="2.2"><path d="M1037.2 1402.5 V1441.5 M1017.2 1422 H1056.3"/><path d="M1029.8 1410 L1037.2 1402.6 L1044.6 1410 M1029.8 1434 L1037.2 1441.4 L1044.6 1434 M1024.7 1414.6 L1017.3 1422 L1024.7 1429.4 M1048.9 1414.6 L1056.2 1422 L1048.9 1429.4"/></g><circle cx="1109.5" cy="1418.8" r="13.4" fill="none" stroke="#c6cbe6" stroke-width="3"/><line x1="1119" y1="1428.5" x2="1131.4" y2="1440.6" stroke="#c6cbe6" stroke-width="3"/><rect x="1165.8" y="1400.3" width="2" height="43.3" fill="#56618a"/><rect x="1425.8" y="1400.3" width="2" height="43.3" fill="#56618a"/><rect x="1613.7" y="1400.3" width="2" height="43.3" fill="#56618a"/><g fill="none" stroke="#c6cbe6" stroke-width="2"><ellipse cx="1220.9" cy="1418.6" rx="19.3" ry="13.4" transform="rotate(-12 1220.9 1418.6)"/><path d="M1212 1431 Q1206 1425.5 1209.5 1424.5 Q1214 1423.5 1212 1431 Q1209 1438 1203 1439"/></g><polygon points="1283,1404.6 1298.6,1418.3 1315.2,1408.7 1306.2,1440.5 1282.4,1429.4" fill="none" stroke="#c6cbe6" stroke-width="2"/><polygon points="1383.9,1401.8 1387.4,1405.3 1379.4,1413.5 1389.2,1417.3 1376,1431.5 1382.9,1433.4 1360.2,1442.2 1369.7,1420.3 1372.2,1428.5 1381.2,1419.7 1369.7,1416.3" fill="#c6cbe6"/><circle cx="1468.5" cy="1434.8" r="6.6" fill="url(#gPB)"/><circle cx="1494.2" cy="1408.6" r="6.8" fill="url(#gPB)"/><line x1="1476" y1="1427" x2="1486.5" y2="1416.5" stroke="#c6cbe6" stroke-width="2.4"/><polygon points="1488.8,1413.9 1489.2,1422 1481,1414" fill="#c6cbe6"/><polygon points="1473,1429.5 1472.8,1421.4 1481,1429.6" fill="#c6cbe6"/><path d="M1507.7 1436.3 L1513 1441.8 L1518.3 1436.3" fill="none" stroke="#a8b0c8" stroke-width="2"/><path d="M1543.4 1434.3 L1569.8 1407.5 M1543.4 1434.3 H1569.8" stroke="#c6cbe6" stroke-width="2"/><path d="M1556 1421.5 Q1561 1427 1561.5 1434" fill="none" stroke="#c6cbe6" stroke-width="1.6"/><circle cx="1569.8" cy="1407.5" r="6.7" fill="url(#gPB)"/><circle cx="1543.4" cy="1434.3" r="6.7" fill="url(#gPB)"/><circle cx="1569.8" cy="1434.3" r="6.7" fill="url(#gPB)"/><path d="M1583.7 1436.3 L1589 1441.8 L1594.3 1436.3" fill="none" stroke="#a8b0c8" stroke-width="2"/><path d="M1651.9 1412.7 H1667.1 M1659.5 1405.2 V1420.3" stroke="#c6cbe6" stroke-width="2.6"/><circle cx="1675.2" cy="1427.8" r="11.4" fill="url(#gPB)"/><path d="M1695.6 1436.3 L1700.9 1441.8 L1706.2 1436.3" fill="none" stroke="#a8b0c8" stroke-width="2"/></g></svg>
</div></body></html>
